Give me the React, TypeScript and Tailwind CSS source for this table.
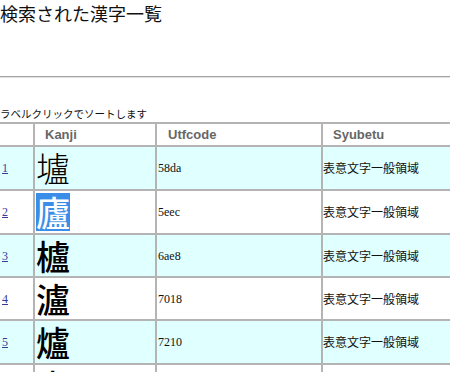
import React from "react";

const rows = [
  { n: "1", k: "壚", code: "58da", light: true },
  { n: "2", k: "廬", code: "5eec", selected: true },
  { n: "3", k: "櫨", code: "6ae8" },
  { n: "4", k: "瀘", code: "7018" },
  { n: "5", k: "爐", code: "7210" },
  { n: "6", k: "盧", code: "76e7" },
];

const heights = ["h-[42px]", "h-[42px]", "h-[41px]", "h-[41px]", "h-[42px]", "h-[42px]"];

export default function App() {
  return (
    <div className="w-[450px] h-[372px] overflow-hidden bg-white text-black">
      <div className="text-[18px] leading-[27px] text-[#111] font-['Noto_Sans_CJK_JP','Noto_Sans',sans-serif]">
        検索された漢字一覧
      </div>
      <div className="mt-[49px] h-[2px] border-t border-t-[#a4a4a4] border-b border-b-[#e2e2e2]" />
      <div className="mt-[28px] text-[10.5px] leading-[16px] text-[#111] font-['Noto_Sans_CJK_JP','Noto_Sans',sans-serif]">
        ラベルクリックでソートします
      </div>
      <div className="w-[540px] pt-[2px] bg-[#b4b4b4] grid grid-cols-[33px_120px_164px_215px] gap-[2px]">
        <div className="h-[21px] bg-white" />
        <div className="h-[21px] bg-white flex items-center pl-[10px] text-[13px] font-bold text-[#666] font-['Liberation_Sans',Arial,sans-serif]">Kanji</div>
        <div className="h-[21px] bg-white flex items-center pl-[11px] text-[13px] font-bold text-[#666] font-['Liberation_Sans',Arial,sans-serif]">Utfcode</div>
        <div className="h-[21px] bg-white flex items-center pl-[10px] text-[13px] font-bold text-[#666] font-['Liberation_Sans',Arial,sans-serif]">Syubetu</div>
        {rows.map((r, i) => {
          const bg = i % 2 === 0 ? "bg-[#e0ffff]" : "bg-white";
          const h = heights[i];
          return (
            <React.Fragment key={r.n}>
              <div className={`${h} ${bg} flex items-center pl-[2px]`}>
                <a href="#" className="text-[12px] leading-[14px] underline text-[#3a3a9c] font-['Liberation_Serif',serif]">{r.n}</a>
              </div>
              <div className={`${h} ${bg} flex items-center pl-[1px]`}>
                {r.selected ? (
                  <span className="inline-flex items-center h-[38px] text-[34px] leading-[34px] bg-[#3b8ee8] text-white font-medium font-['Noto_Sans_CJK_JP',sans-serif]">{r.k}</span>
                ) : (
                  <span className={`text-[34px] leading-[34px] ${r.light ? "font-light" : "font-medium"} text-black font-['Noto_Sans_CJK_JP',sans-serif]`}>{r.k}</span>
                )}
              </div>
              <div className={`${h} ${bg} flex items-center pl-[1px] text-[12px] leading-[14px] text-[#111] font-['Liberation_Serif',serif]`}>
                {r.code}
              </div>
              <div className={`${h} ${bg} flex items-center text-[12px] leading-[14px] text-[#111] font-['Noto_Sans_CJK_JP',sans-serif]`}>
                表意文字一般領域
              </div>
            </React.Fragment>
          );
        })}
      </div>
    </div>
  );
}
